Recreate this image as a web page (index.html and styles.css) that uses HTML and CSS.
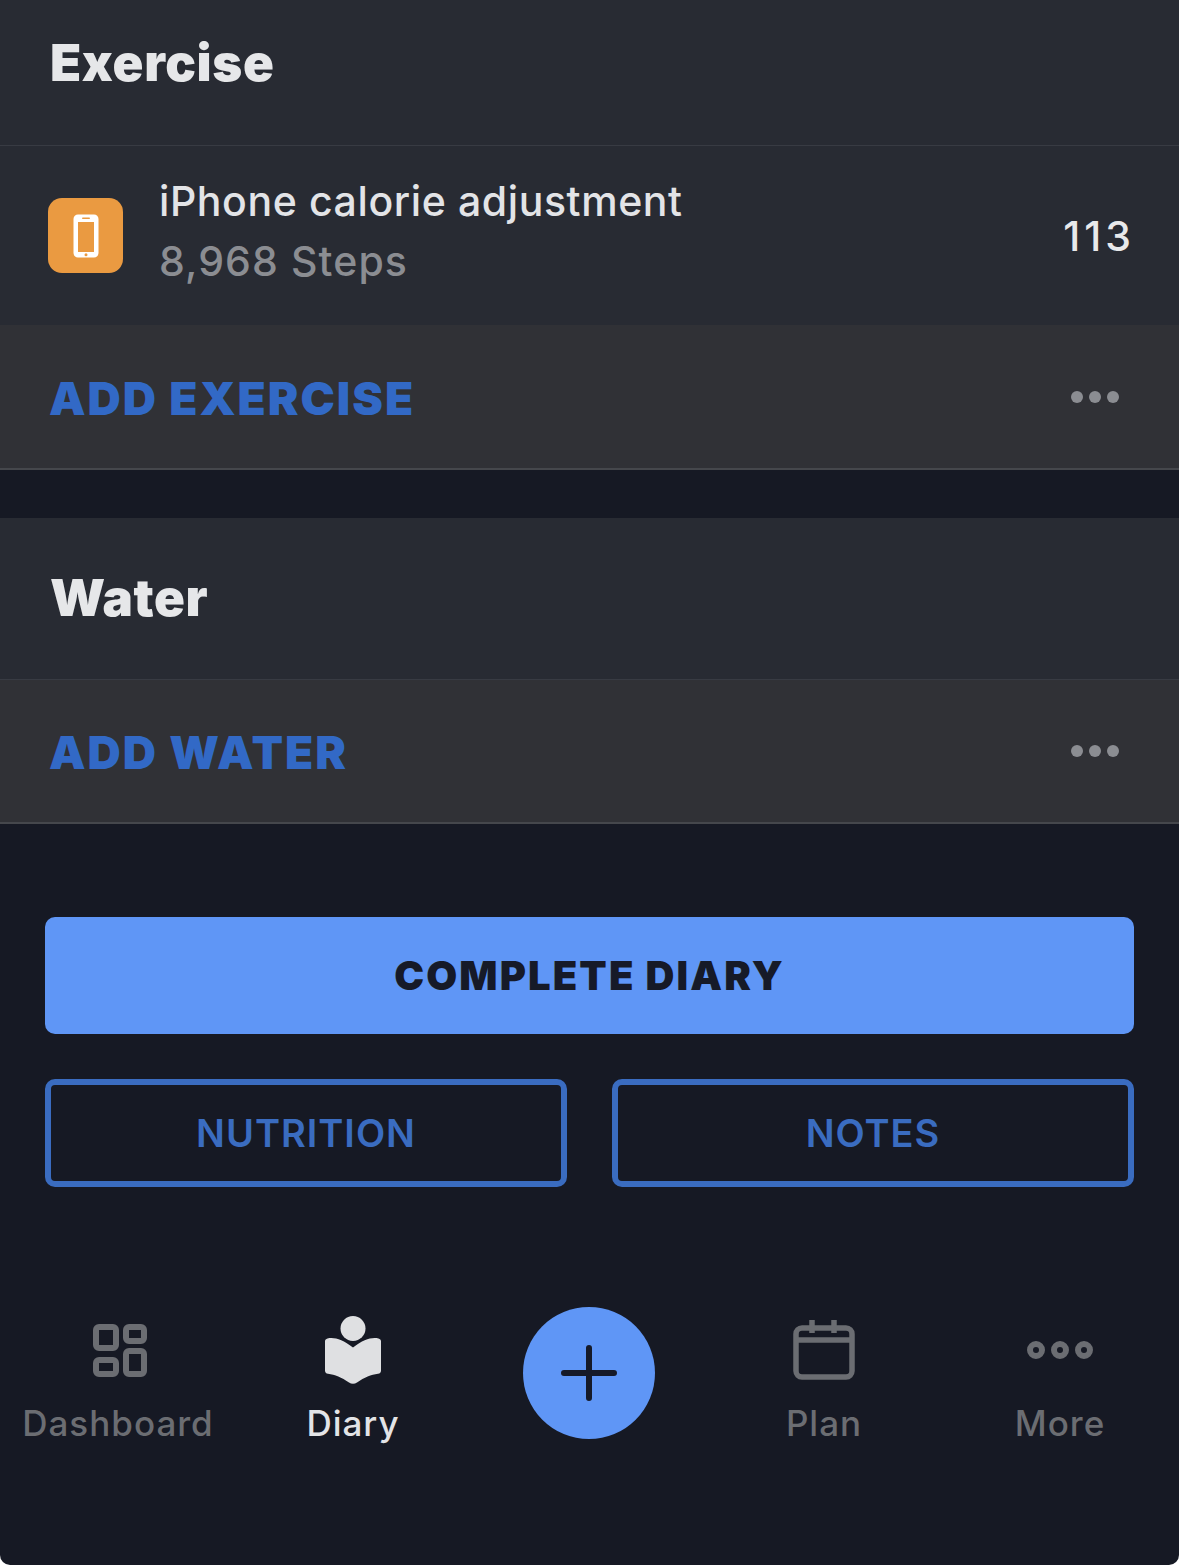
FILE: index.html
```html
<!DOCTYPE html>
<html lang="en">
<head>
    <meta charset="UTF-8">
    <meta name="viewport" content="width=device-width, initial-scale=1.0">
    <title>Diary</title>
    <link rel="stylesheet" href="styles.css">
</head>
<body>
    <div class="app">
        <section class="card">
            <h2 class="card-title card-title-exercise">Exercise</h2>
            <div class="entry">
                <div class="entry-icon">
                    <svg width="26" height="44" viewBox="0 0 26 44">
                        <path fill="#fff" fill-rule="evenodd" d="M5 0.5h16a4.5 4.5 0 0 1 4.5 4.5v34a4.5 4.5 0 0 1-4.5 4.500h-16a4.500 4.500 0 0 1-4.500-4.500v-34a4.500 4.500 0 0 1 4.500-4.500zM5 8v30h16v-30z"/>
                        <rect x="9" y="3.500" width="8" height="1.600" rx="0.800" fill="#ea9a41"/>
                        <circle cx="13" cy="40.800" r="1.500" fill="#ea9a41"/>
                    </svg>
                </div>
                <div class="entry-text">
                    <div class="entry-name">iPhone calorie adjustment</div>
                    <div class="entry-sub">8,968 Steps</div>
                </div>
                <div class="entry-value">113</div>
            </div>
            <div class="add-row">
                <span class="add-link">ADD EXERCISE</span>
                <span class="dots"><i></i><i></i><i></i></span>
            </div>
        </section>

        <section class="card card-water">
            <h2 class="card-title card-title-water">Water</h2>
            <div class="add-row add-row-water">
                <span class="add-link">ADD WATER</span>
                <span class="dots"><i></i><i></i><i></i></span>
            </div>
        </section>

        <div class="actions">
            <button class="btn-primary">COMPLETE DIARY</button>
            <div class="btn-row">
                <button class="btn-outline">NUTRITION</button>
                <button class="btn-outline">NOTES</button>
            </div>
        </div>

        <nav class="tabbar">
            <div class="tab">
                <div class="tab-icon tab-icon-dash">
                    <svg width="54" height="54" viewBox="0 0 54 54" fill="none" stroke="#6b6d72" stroke-width="6">
                        <rect x="3" y="3" width="20" height="21" rx="3"/>
                        <rect x="33" y="3" width="18" height="14" rx="3"/>
                        <rect x="3" y="36" width="20" height="14" rx="3"/>
                        <rect x="33" y="27" width="18" height="23" rx="3"/>
                    </svg>
                </div>
                <span>Dashboard</span>
            </div>
            <div class="tab tab-active">
                <div class="tab-icon">
                    <svg width="56" height="68" viewBox="0 0 56 68">
                        <ellipse cx="28" cy="12.500" rx="12.500" ry="12.500" fill="#dfe0e2"/>
                        <path fill="#dfe0e2" d="M2.500 22.500c7-1.500 15 1 25.500 9 10.500-8 18.500-10.500 25.500-9 1.500.4 2.500 1.200 2.500 3v29c0 2-1 3-3 3.200-7 .8-13.500 3.500-21 8.800-2.500 1.800-5.500 1.800-8 0-7.500-5.300-14-8-21-8.800-2-.2-3-1.200-3-3.200v-29c0-1.800 1-2.600 2.500-3z"/>
                    </svg>
                </div>
                <span>Diary</span>
            </div>
            <div class="tab-add">
                <svg width="56" height="56" viewBox="0 0 56 56" fill="none" stroke="#161a28" stroke-width="6" stroke-linecap="round">
                    <path d="M28 3v50M3 28h50"/>
                </svg>
            </div>
            <div class="tab">
                <div class="tab-icon">
                    <svg width="62" height="60" viewBox="0 0 62 60" fill="none" stroke="#6b6d72" stroke-width="5.500">
                        <rect x="3" y="8" width="56" height="49" rx="6"/>
                        <path d="M3 20h56M19 0v13M41 0v13"/>
                    </svg>
                </div>
                <span>Plan</span>
            </div>
            <div class="tab">
                <div class="tab-icon">
                    <svg width="66" height="18" viewBox="0 0 66 18" fill="none" stroke="#6b6d72" stroke-width="6">
                        <circle cx="9" cy="9" r="6"/>
                        <circle cx="33" cy="9" r="6"/>
                        <circle cx="57" cy="9" r="6"/>
                    </svg>
                </div>
                <span>More</span>
            </div>
        </nav>
    </div>
</body>
</html>
```

FILE: styles.css
```css
html, body {
    margin: 0;
    padding: 0;
    background: #fff;
}

body {
    font-family: 'Inter', 'Liberation Sans', sans-serif;
}

.app {
    width: 1179px;
    height: 1565px;
    background-color: #161924;
    border-radius: 0 0 10px 10px;
    overflow: hidden;
}

.card {
    background-color: #282b33;
}

.card-water {
    margin-top: 48px;
}

.card-title {
    margin: 0;
    padding-left: 50px;
    font-size: 51px;
    font-weight: 900;
    letter-spacing: 0.6px;
    color: #e6e7e9;
    display: flex;
    align-items: center;
    border-bottom: 1px solid #383b43;
    box-sizing: border-box;
}

.card-title-exercise {
    height: 146px;
    padding-bottom: 20px;
}

.card-title-water {
    height: 162px;
    padding-bottom: 2px;
}

.entry {
    height: 179px;
    display: flex;
    align-items: center;
    padding: 0 49px 0 48px;
}

.entry-icon {
    width: 75px;
    height: 75px;
    background-color: #ea9a41;
    border-radius: 14px;
    display: flex;
    align-items: center;
    justify-content: center;
}

.entry-text {
    flex: 1;
    margin-left: 36px;
    margin-top: -10px;
}

.entry-name {
    font-size: 41px;
    font-weight: 500;
    letter-spacing: 0.6px;
    line-height: 60px;
    color: #e3e4e7;
}

.entry-sub {
    font-size: 41px;
    font-weight: 500;
    letter-spacing: 1.100px;
    line-height: 60px;
    color: #8b8d92;
}

.entry-value {
    font-size: 41px;
    font-weight: 500;
    letter-spacing: 4px;
    margin-right: -5px;
    color: #e8e9eb;
}

.add-row {
    height: 145px;
    box-sizing: border-box;
    background-color: #303136;
    border-bottom: 2px solid #45474c;
    display: flex;
    align-items: center;
    justify-content: space-between;
    padding: 0 60px 0 49px;
}

.add-row-water {
    height: 144px;
}

.add-link {
    font-size: 46px;
    font-weight: 900;
    letter-spacing: 2px;
    color: #3269c6;
    margin-top: 2px;
}

.dots {
    display: flex;
    gap: 6px;
}

.dots i {
    display: block;
    width: 12px;
    height: 12px;
    border-radius: 50%;
    background-color: #8b8d92;
}

.actions {
    padding: 93px 45px 0;
}

.btn-primary {
    display: block;
    width: 100%;
    height: 117px;
    border: none;
    border-radius: 10px;
    background-color: #5f96f6;
    color: #161a28;
    font-family: inherit;
    font-size: 40px;
    font-weight: 900;
    letter-spacing: 2.100px;
}

.btn-row {
    display: flex;
    gap: 45px;
    margin-top: 45px;
}

.btn-outline {
    flex: 1;
    height: 108px;
    background: none;
    border: 6px solid #3a6cc0;
    border-radius: 10px;
    color: #3a6cc0;
    font-family: inherit;
    font-size: 38px;
    font-weight: 600;
    letter-spacing: 1px;
}

.tabbar {
    position: relative;
    margin-top: 120px;
    height: 150px;
}

.tab {
    position: absolute;
    top: 9px;
    width: 236px;
    display: flex;
    flex-direction: column;
    align-items: center;
    font-size: 35px;
    font-weight: 500;
    letter-spacing: 1px;
    line-height: 42px;
    color: #6b6d72;
}

.tab-icon {
    height: 68px;
    margin-bottom: 18px;
    display: flex;
    align-items: center;
    justify-content: center;
}

.tab-icon-dash {
    padding: 2px 0 0 3px;
    height: 66px;
}

.tab:nth-child(1) { left: 0; }
.tab:nth-child(2) { left: 235px; }
.tab:nth-child(4) { left: 706px; }
.tab:nth-child(5) { left: 942px; }

.tab-active {
    color: #e3e4e7;
}

.tab-add {
    position: absolute;
    left: 523px;
    top: 0;
    width: 132px;
    height: 132px;
    border-radius: 50%;
    background-color: #5f96f6;
    display: flex;
    align-items: center;
    justify-content: center;
}
```
